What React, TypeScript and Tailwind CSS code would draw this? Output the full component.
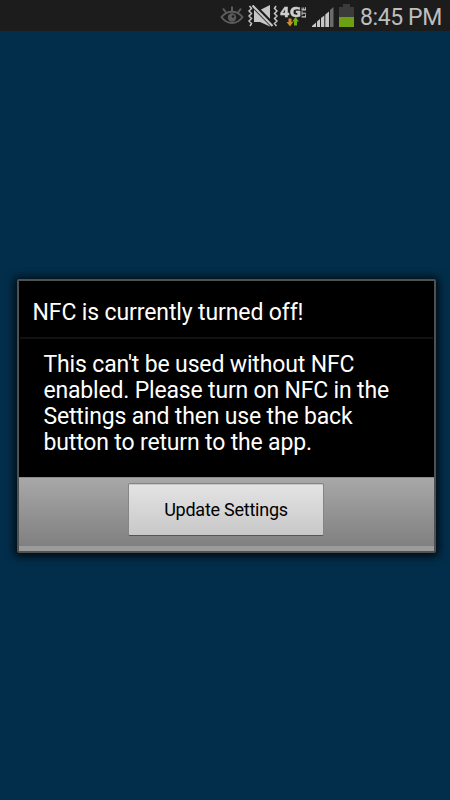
const MESSAGE_LINES = [
  { text: "This can't be used without NFC", className: 'tracking-[-0.15px]' },
  { text: 'enabled. Please turn on NFC in the', className: 'tracking-[-0.18px]' },
  { text: 'Settings and then use the back', className: 'tracking-[-0.17px]' },
  { text: 'button to return to the app.', className: 'tracking-[-0.16px]' },
];

function EyeIcon() {
  return (
    <svg className="w-6 h-[19px]" viewBox="0 0 24 19" fill="none" stroke="#5c5c5c">
      <path d="M1.5 11C7 4 17 4 22.5 11C17 19 7 19 1.5 11Z" strokeWidth="2" />
      <path d="M12 5V0.5M6 6.5L3 2.5M18 6.5L21 2.5" strokeWidth="2" />
      <circle cx="12" cy="11.5" r="4.2" fill="#5c5c5c" stroke="none" />
      <circle cx="13" cy="10.5" r="1.3" fill="#1c1c1c" stroke="none" />
    </svg>
  );
}

function MutedIcon() {
  return (
    <svg className="w-[30px] h-[22px]" viewBox="0 0 30 22">
      <path d="M6 5H12L22 0V21.5L12 17H6Z" fill="#c6c6c6" />
      <path d="M4 -1L25 20.5" stroke="#1c1c1c" strokeWidth="5" />
      <path d="M4.5 0.5L24.5 21" stroke="#c6c6c6" strokeWidth="2.2" />
      <path
        d="M1.5 1L3.5 3.5L1 6L3.5 8.5L1 11L3.5 13.5L1 16L3.5 18.5L2 21M28 1L26.5 3.5L29 6L26.5 8.5L29 11L26.5 13.5L29 16L26.5 18.5L28.5 21"
        fill="none"
        stroke="#c6c6c6"
        strokeWidth="1.5"
      />
    </svg>
  );
}

function NetworkIcon() {
  return (
    <svg className="w-[27px] h-[27px] overflow-visible will-change-transform" viewBox="0 -5 27 27">
      <text
        x="0"
        y="11"
        textLength="21"
        lengthAdjust="spacingAndGlyphs"
        fill="#cfcfcf"
        stroke="#cfcfcf"
        strokeWidth="0.4"
        className="font-['DejaVu_Sans',sans-serif] font-bold text-[14px]"
      >
        4G
      </text>
      <text
        transform="translate(25.8 12) rotate(-90)"
        textLength="11"
        lengthAdjust="spacingAndGlyphs"
        fill="#c6c6c6"
        className="font-['DejaVu_Sans',sans-serif] font-bold text-[6px]"
      >
        LTE
      </text>
      <path d="M8.5 12.5H11.5V16H13.2L10 20.5L6.5 16H8.5Z" fill="#cf8a2b" />
      <path d="M14 19.5V15.5H12.2L15.5 11L19 15.5H17V19.5Z" fill="#70b010" />
    </svg>
  );
}

function SignalIcon() {
  return (
    <svg className="w-[22px] h-5" viewBox="0 0 22 20">
      <path d="M0 20V19L4 15.5V20Z" fill="#c6c6c6" />
      <path d="M5 20V14.5L8 12V20Z" fill="#c6c6c6" />
      <path d="M9 20V11L12.3 8.5V20Z" fill="#c6c6c6" />
      <path d="M13.3 20V7.5L17 4.5V20Z" fill="#c6c6c6" />
      <path d="M18 20V3L21.5 0V20Z" fill="#6b6b6b" />
    </svg>
  );
}

function BatteryIcon() {
  return (
    <svg className="w-[15px] h-[23px]" viewBox="0 0 15 23">
      <path d="M0 3H4V0H11V3H15V23H0Z" fill="#3b3b3b" />
      <path d="M0 13H15V23H0Z" fill="#6d9f12" />
    </svg>
  );
}

function StatusBar() {
  return (
    <header className="flex h-[31px] shrink-0 items-start bg-[#1c1c1c] pl-[220px]">
      <div className="pt-1.5">
        <EyeIcon />
      </div>
      <div className="ml-1 pt-[5px]">
        <MutedIcon />
      </div>
      <div className="ml-0.5 pt-px">
        <NetworkIcon />
      </div>
      <div className="ml-[5px] pt-[7px]">
        <SignalIcon />
      </div>
      <div className="ml-[5px] pt-1">
        <BatteryIcon />
      </div>
      <time className="ml-1.5 pt-[3px] text-[23px] leading-[30px] tracking-[-0.4px] whitespace-nowrap text-[#bebebe]">
        8:45 PM
      </time>
    </header>
  );
}

function NfcDialog() {
  return (
    <section
      role="dialog"
      aria-labelledby="nfc-title"
      className="mt-[248px] ml-[17px] flex h-[274px] w-[419px] flex-col rounded-[2px] border-2 border-[#505050] bg-black shadow-[0_1px_8px_3px_rgba(0,0,0,0.75)]"
    >
      <h1
        id="nfc-title"
        className="mx-px h-[58px] border-b-2 border-[#121212] pt-[17px] pl-[12.5px] text-[23px] leading-[30px] tracking-[-0.12px] whitespace-nowrap"
      >
        NFC is currently turned off!
      </h1>
      <div className="h-[138px] pt-[13px] pl-[24.5px] text-[23px] leading-[26px] whitespace-nowrap">
        {MESSAGE_LINES.map((line) => (
          <p key={line.text} className={line.className}>
            {line.text}
          </p>
        ))}
      </div>
      <footer className="flex h-[74px] justify-center border-t border-b-[5px] border-t-[#8c8c8c] border-b-[#9b9b9b] bg-linear-to-b from-[#a8a8a8] to-[#808080] pt-[5px] pr-px">
        <button
          type="button"
          className="h-[53px] w-[196px] rounded-[2px] border border-[#858585] border-b-[#555] bg-linear-to-b from-[#e4e4e4] to-[#c8c8c8] text-[18px] tracking-[-0.25px] text-black shadow-[inset_0_1px_0_#c8c8c8]"
        >
          Update Settings
        </button>
      </footer>
    </section>
  );
}

export default function App() {
  return (
    <main className="flex h-[800px] w-[450px] flex-col overflow-hidden bg-[#032e4b] font-[Roboto,sans-serif] text-white">
      <StatusBar />
      <NfcDialog />
    </main>
  );
}
